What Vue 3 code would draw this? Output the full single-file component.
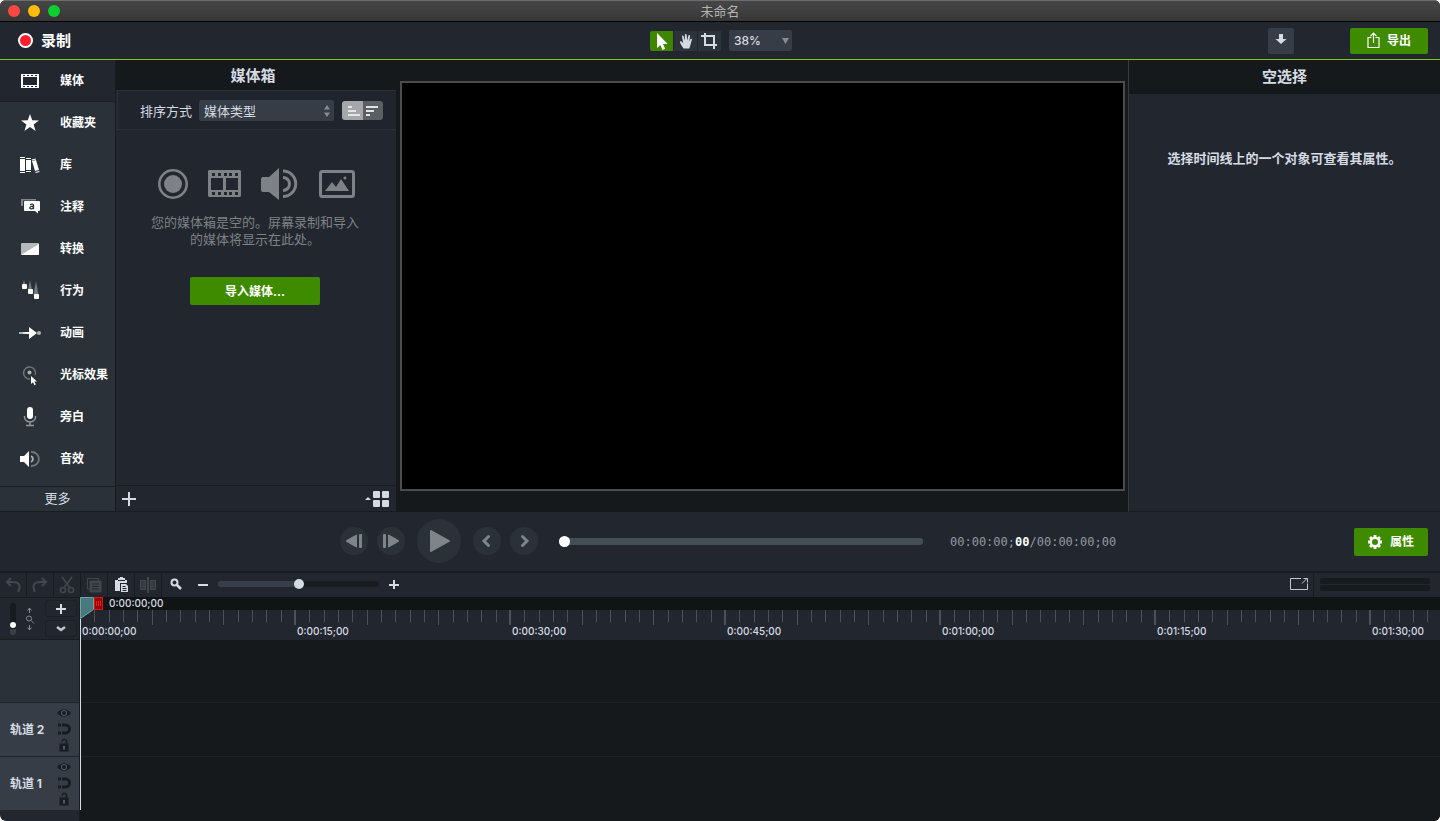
<script setup>
import { ref } from 'vue'

const tools = [
  { id: 'media', label: '媒体' },
  { id: 'favorites', label: '收藏夹' },
  { id: 'library', label: '库' },
  { id: 'annotations', label: '注释' },
  { id: 'transitions', label: '转换' },
  { id: 'behaviors', label: '行为' },
  { id: 'animations', label: '动画' },
  { id: 'cursor', label: '光标效果' },
  { id: 'narration', label: '旁白' },
  { id: 'audio', label: '音效' },
]
const activeTool = ref('media')
const position = ref(0)
const zoom = ref(50)
const trackHeight = ref(25)
const tracks = ['轨道 2', '轨道 1']

const secondWidth = 215 / 15
const ticks = Array.from({ length: 94 }, (_, i) => i + 1).map((s) => {
  const major = s % 15 === 0
  return {
    x: Math.round(s * secondWidth) - (major ? 1 : 0),
    h: s % 5 === 0 ? 15 : 12,
    w: major ? 2 : 1,
  }
})
const labels = ['0:00:00;00', '0:00:15;00', '0:00:30;00', '0:00:45;00', '0:01:00;00', '0:01:15;00', '0:01:30;00']
</script>

<template>
  <div class="window">
    <header class="titlebar">
      <div class="lights"><i class="red"></i><i class="yellow"></i><i class="green"></i></div>
      <span>未命名</span>
    </header>

    <div class="toolbar">
      <div class="side">
        <button class="record"><i></i>录制</button>
      </div>
      <div class="center">
        <div class="modes">
          <button class="on" aria-label="选择">
            <svg width="24" height="20" viewBox="0 0 24 20"><path d="M7 2v15l3.300-3 2.200 5 2.700-1.200-2.200-4.800h4.700z" fill="#fff" /></svg>
          </button>
          <button aria-label="平移">
            <svg width="24" height="20" viewBox="0 0 24 20"><path d="M9.500 17.500C8 15 6.500 13 6 11.200c-.2-1 .9-1.300 1.600-.6l1.600 1.600L8 5.500c-.2-1.200 1.300-1.500 1.600-.3l1.200 4.300.1-5.600c0-1.300 1.700-1.300 1.800 0l.4 5.500 1.300-4.600c.3-1.100 1.800-.8 1.600.4l-.8 5.200 1.400-2.300c.6-.9 1.700-.4 1.400.5-.7 2-1.400 5.900-2.700 8.900z" fill="#d5dbe3" /></svg>
          </button>
          <button aria-label="裁剪">
            <svg width="24" height="20" viewBox="0 0 24 20" fill="none" stroke="#d5dbe3" stroke-width="2"><path d="M7 2v12h12M3 5h13v13" /></svg>
          </button>
        </div>
        <div class="select scale">
          <select aria-label="缩放"><option>38%</option></select>
          <svg width="7" height="6" viewBox="0 0 7 6"><path d="M0 0h7L3.500 6z" fill="#858c94" /></svg>
        </div>
      </div>
      <div class="side end">
        <button class="download" aria-label="下载">
          <svg width="26" height="26" viewBox="0 0 26 26"><path d="M11 6h4v5h3.500L13 16 7.500 11H11z" fill="#d5dbe3" /></svg>
        </button>
        <button class="primary export">
          <svg width="13" height="17" viewBox="0 0 13 17" fill="none" stroke="#fff" stroke-width="1.200"><path d="M4.500 5.500H1v10h11v-10H8.500M6.500 11V1.500M3.500 4.200l3-3 3 3" /></svg>
          导出
        </button>
      </div>
    </div>

    <main class="main">
      <nav class="tools">
        <button v-for="t in tools" :key="t.id" class="tool" :class="{ active: t.id === activeTool }" @click="activeTool = t.id">
          <svg width="24" height="24" viewBox="0 0 24 24" fill="#fff">
            <template v-if="t.id === 'media'">
              <path fill-rule="evenodd" d="M3 5h18v14H3zm1 3v8h16V8zM5 6v1h2V6zm4 0v1h2V6zm4 0v1h2V6zm4 0v1h2V6zM5 17v1h2v-1zm4 0v1h2v-1zm4 0v1h2v-1zm4 0v1h2v-1z" />
              <path d="M4 8h1v8H4zm15 0h1v8h-1z" />
            </template>
            <path v-else-if="t.id === 'favorites'" d="M12 3l2.200 6.300 6.800.2-5.400 4 2 6.500-5.600-3.900L6.400 20l2-6.500L3 9.500l6.800-.2z" />
            <g v-else-if="t.id === 'library'">
              <path d="M2 6h5v12H2zM8 7h5v10H8zM14 8l4-1 3 10-4 1zM2 4h5v1H2zM2 19h5v1H2zM8 5h5v1H8zM8 18h5v1H8zM13.700 6.500l4-1 .3 1-4 1zM17.300 19l4-1 .2 1-4 1z" />
            </g>
            <template v-else-if="t.id === 'annotations'">
              <path d="M3 4h15v1.500H5V11H3z" fill="#80868b" />
              <path fill-rule="evenodd" d="M7 6h14q1 0 1 1v8q0 1-1 1h-1v2.500L17 16H7q-1 0-1-1V7q0-1 1-1z" />
              <path d="M12 9.700q3-1.500 3.500.8v3.700M15.300 11.200c-4-.1-4.500 3-1.800 2.600q1.500-.3 1.800-1.500" fill="none" stroke="#2a3138" stroke-width="1.300" />
            </template>
            <template v-else-if="t.id === 'transitions'">
              <path d="M4 6h16q1 0 1 1v10q0 1-1 1H4q-1 0-1-1V7q0-1 1-1z" fill="#b5b9bc" /><path d="M21 7v10q0 1-1 1H3z" />
            </template>
            <template v-else-if="t.id === 'behaviors'">
              <path d="M6 1l1.500 5h-3zM12 1l2 10h-4zM18 2l2.500 14h-5z" fill="#73797e" /><rect x="4" y="5" width="5" height="5" rx="1" /><rect x="10" y="10" width="5" height="5" rx="1" /><rect x="16" y="15" width="5" height="5" rx="1" />
            </template>
            <template v-else-if="t.id === 'animations'">
              <path d="M1 11h10v2H1z" fill="#adb2b5" /><circle cx="21" cy="12" r="2" fill="#adb2b5" /><path d="M5 11.500l6-.5V6l8 6-8 6v-5l-6-.5z" />
            </template>
            <template v-else-if="t.id === 'cursor'">
              <path d="M12 16A6 6 0 1 1 17.200 12" fill="none" stroke="#70777c" stroke-width="1.500" /><circle cx="11.500" cy="9.500" r="2" fill="#adb2b5" /><path d="M13 13v8l2-1.800 1.400 3 1.400-.6-1.400-3h2.600z" />
            </template>
            <template v-else-if="t.id === 'narration'">
              <rect x="9" y="2" width="6" height="12" rx="3" /><path d="M6.500 11v1c0 6.500 11 6.500 11 0v-1M12 17v3M8 20.500h8" fill="none" stroke="#92989c" stroke-width="1.500" />
            </template>
            <template v-else>
              <path d="M2 9h4l5-5v16l-5-5H2z" /><path d="M13 9.200a3 3 0 0 1 0 5.600" fill="none" stroke="#aeb3b6" stroke-width="1.800" /><path d="M13 5c10.500-.5 10.500 14.500 0 14" fill="none" stroke="#70777c" stroke-width="1.800" />
            </template>
          </svg>
          {{ t.label }}
        </button>
        <button class="more">更多</button>
      </nav>

      <section class="media">
        <h2>媒体箱</h2>
        <div class="sort">
          <label for="sort">排序方式</label>
          <div class="select sorter">
            <select id="sort"><option>媒体类型</option></select>
            <svg width="6" height="12" viewBox="0 0 6 12"><path d="M3 0l3 4.500H0zM0 7.500h6L3 12z" fill="#858c94" /></svg>
          </div>
          <div class="order">
            <button class="on" aria-label="升序"><svg width="20" height="18" viewBox="0 0 20 18" stroke="#e3e4e6" stroke-width="2"><path d="M5 5h4M5 9h8M5 13h12" /></svg></button>
            <button aria-label="降序"><svg width="20" height="18" viewBox="0 0 20 18" stroke="#e3e4e6" stroke-width="2"><path d="M3 5h12M3 9h8M3 13h4" /></svg></button>
          </div>
        </div>
        <div class="empty">
          <div class="kinds">
            <svg width="30" height="32" viewBox="0 0 30 32"><circle cx="15" cy="16" r="13.700" fill="none" stroke="#7e8185" stroke-width="2.600" /><circle cx="15" cy="16" r="9" fill="#7e8185" /></svg>
            <svg width="33" height="32" viewBox="0 0 33 32"><path fill-rule="evenodd" fill="#7e8185" d="M1 2h31l1 1v25l-1 1H1l-1-1V3zm2 8v12h12V10zm15 0v12h12V10zM4 5v3h3V5zm6 0v3h3V5zm6 0v3h3V5zm5 0v3h3V5zm6 0v3h3V5zM4 24v3h3v-3zm6 0v3h3v-3zm6 0v3h3v-3zm5 0v3h3v-3zm6 0v3h3v-3z" /></svg>
            <svg width="38" height="34" viewBox="0 0 38 34"><path d="M2 10h6L18 1v32L8 25H2q-2 0-2-2V12q0-2 2-2z" fill="#7e8185" /><path d="M22 10.500a6.500 6.500 0 0 1 0 13M22 4a12.700 12.700 0 0 1 0 25.500" fill="none" stroke="#7e8185" stroke-width="3" /></svg>
            <svg width="36" height="32" viewBox="0 0 36 32"><rect x="1.500" y="3.500" width="33" height="25" rx="2" fill="none" stroke="#7e8185" stroke-width="3" /><path d="M6 23l7-9 4 5 5-8 8 12zM26 8.500a1.500 1.500 0 1 1-.1 0z" fill="#7e8185" /></svg>
          </div>
          <p>您的媒体箱是空的。屏幕录制和导入<br />的媒体将显示在此处。</p>
          <button class="primary import">导入媒体...</button>
        </div>
        <div class="bin-foot">
          <button aria-label="添加"><svg width="14" height="14" viewBox="0 0 14 14" stroke="#d5dbe3" stroke-width="2"><path d="M7 0v14M0 7h14" /></svg></button>
          <button aria-label="视图"><svg width="24" height="16" viewBox="0 0 24 16" fill="#d5dbe3"><path d="M0 9l3-3 3 3z" /><rect x="8" width="7" height="7" rx="1" /><rect x="17" width="7" height="7" rx="1" /><rect x="8" y="9" width="7" height="7" rx="1" /><rect x="17" y="9" width="7" height="7" rx="1" /></svg></button>
        </div>
      </section>

      <section class="stage"><div class="video"></div></section>

      <aside class="props">
        <h2>空选择</h2>
        <p>选择时间线上的一个对象可查看其属性。</p>
      </aside>
    </main>

    <div class="playback">
      <div class="transport">
        <button aria-label="上一帧"><svg width="16" height="14" viewBox="0 0 16 14" fill="#7e848a"><path d="M11 .5v13Q9 13 0 7.500V6.500Q9 1 11 .5z" /><rect x="13" width="3" height="14" rx="1" /></svg></button>
        <button aria-label="下一帧"><svg width="16" height="14" viewBox="0 0 16 14" fill="#7e848a"><path d="M5 .5v13Q7 13 16 7.500V6.500Q7 1 5 .5z" /><rect width="3" height="14" rx="1" /></svg></button>
        <button class="play" aria-label="播放"><svg width="22" height="24" viewBox="0 0 22 24"><path d="M3 2v20l18-10z" fill="#7e848a" stroke="#7e848a" stroke-width="2" stroke-linejoin="round" /></svg></button>
        <button aria-label="上一个"><svg width="14" height="14" viewBox="0 0 14 14" fill="none" stroke="#7e848a" stroke-width="3" stroke-linecap="round"><path d="M8.500 2.500L4 7l4.500 4.500" /></svg></button>
        <button aria-label="下一个"><svg width="14" height="14" viewBox="0 0 14 14" fill="none" stroke="#7e848a" stroke-width="3" stroke-linecap="round"><path d="M5.500 2.500L10 7l-4.500 4.500" /></svg></button>
      </div>
      <input v-model="position" class="scrub" type="range" min="0" max="100" aria-label="播放位置" />
      <div class="time">00:00:00;<b>00</b>/00:00:00;00</div>
      <button class="primary properties">
        <svg width="14" height="14" viewBox="0 0 14 14"><circle cx="7" cy="7" r="4.300" fill="none" stroke="#fff" stroke-width="2.500" /><path d="M7 0v2M7 12v2M0 7h2M12 7h2M2 2l1.500 1.500M10.500 10.500L12 12M2 12l1.500-1.500M10.500 3.500L12 2" stroke="#fff" stroke-width="2.800" /></svg>
        属性
      </button>
    </div>

    <div class="editbar">
      <button aria-label="撤销"><svg width="20" height="18" viewBox="0 0 20 18" fill="none" stroke="#42474d" stroke-width="2"><path d="M8 2L4 6l4 4M4 6h6c7 0 8 5 5 10" /></svg></button>
      <button aria-label="重做"><svg width="20" height="18" viewBox="0 0 20 18" fill="none" stroke="#42474d" stroke-width="2"><path d="M12 2l4 4-4 4M16 6h-6C3 6 2 11 5 16" /></svg></button>
      <button aria-label="剪切"><svg width="20" height="18" viewBox="0 0 20 18" fill="none" stroke="#42474d" stroke-width="1.600"><path d="M5 1l8 11M15 1L7 12" /><circle cx="6" cy="14" r="2.500" /><circle cx="14" cy="14" r="2.500" /></svg></button>
      <button aria-label="复制"><svg width="20" height="18" viewBox="0 0 20 18" fill="none" stroke="#42474d"><path d="M5.500 13h-2V2.500h11V4" /><path d="M6 5h11v11H6z" fill="#42474d" /><path d="M8 8h7M8 10.500h7M8 13h7" stroke="#22272f" /></svg></button>
      <button aria-label="粘贴"><svg width="20" height="18" viewBox="0 0 20 18" fill="#d5dbe3"><path d="M4 4h3V2h2V1h3v1h2v2h2v3H9v8H4z" /><path d="M7 4.500h7" stroke="#22272f" /><path fill-rule="evenodd" d="M10 8h5l2 2v6h-7zm1.500 2v1h3v-1zm0 2v1h4v-1zm0 2v1h4v-1z" /></svg></button>
      <button aria-label="拆分"><svg width="20" height="18" viewBox="0 0 20 18" fill="#373c42" stroke="#42474d"><rect x="2.500" y="4.500" width="5" height="9" /><rect x="12.500" y="4.500" width="5" height="9" /><path d="M10 1v16" stroke-width="2" /></svg></button>
      <div class="zoomer">
        <svg width="12" height="12" viewBox="0 0 12 12" fill="none" stroke="#d5dbe3" stroke-width="2"><circle cx="4.500" cy="4.500" r="3" /><path d="M7 7l4 4" stroke-width="2.500" /></svg>
        <button aria-label="缩小"><svg width="10" height="10" viewBox="0 0 10 10" stroke="#d5dbe3" stroke-width="2"><path d="M0 6h10" /></svg></button>
        <input v-model="zoom" type="range" aria-label="时间线缩放" />
        <button aria-label="放大"><svg width="10" height="10" viewBox="0 0 10 10" stroke="#d5dbe3" stroke-width="2"><path d="M0 6h10M5 1v10" /></svg></button>
      </div>
      <button class="detach" aria-label="分离时间线"><svg width="20" height="14" viewBox="0 0 20 14" fill="none" stroke="#c1c6cc"><path d="M12 1.500H1.500v11h17V6.500M13 6.500L18 1.500M14.500 1.500h4v4" /></svg></button>
      <div class="meters"><i></i><i></i></div>
    </div>

    <section class="timeline">
      <div class="heads">
        <div class="controls">
          <input v-model="trackHeight" class="vertical" type="range" aria-label="轨道高度" />
          <svg width="10" height="24" viewBox="0 0 10 24" fill="none" stroke="#858b91"><path d="M4.500 1v5M2.500 3.500l2-2.500 2 2.500M4.500 23v-5M2.500 20.500l2 2.500 2-2.500" /><circle cx="4" cy="11.500" r="2.500" /><path d="M6 13.500l3 3" /></svg>
          <div class="stack">
            <button aria-label="添加轨道"><svg width="10" height="10" viewBox="0 0 10 10" stroke="#d5dbe3" stroke-width="2"><path d="M0 5h10M5 0v10" /></svg></button>
            <button aria-label="轨道选项"><svg width="10" height="6" viewBox="0 0 10 6" fill="none" stroke="#c1c6cc" stroke-width="2.500"><path d="M1 1l4 3 4-3" /></svg></button>
          </div>
        </div>
        <div class="spacer"></div>
        <div v-for="t in tracks" :key="t" class="head">
          <span>{{ t }}</span>
          <div class="flags">
            <button aria-label="可见"><svg width="14" height="10" viewBox="0 0 14 10"><path d="M0 5q7-7.500 14 0-7 7.500-14 0z" fill="#191d21" /><circle cx="7" cy="5" r="2.500" fill="#191d21" stroke="#4b525a" stroke-width="1.200" /></svg></button>
            <button aria-label="磁性"><svg width="14" height="12" viewBox="0 0 14 12"><path d="M5 2h3.500a4 4 0 0 1 0 8H5" fill="none" stroke="#191d21" stroke-width="3" /><path d="M1 .5h3v3H1zM1 8.500h3v3H1z" fill="#191d21" /></svg></button>
            <button aria-label="锁定"><svg width="14" height="14" viewBox="0 0 14 14"><path d="M5 3.500q1.500-4 4.500-1V6" fill="none" stroke="#191d21" stroke-width="1.500" /><rect x="2.500" y="5.500" width="9" height="8" fill="#191d21" /><path d="M7 8v3.500" stroke="#68717a" stroke-width="1.500" /></svg></button>
          </div>
        </div>
        <div class="head-foot"></div>
      </div>
      <div class="lanes">
        <div class="top"><span>0:00:00;00</span></div>
        <div class="ruler">
          <svg width="1400" height="15"><rect v-for="t in ticks" :key="t.x" :x="t.x" y="0" :width="t.w" :height="t.h" fill="#4c5157" /></svg>
          <div class="labels"><span v-for="l in labels" :key="l">{{ l }}</span></div>
        </div>
        <div class="lane gap"></div>
        <div class="lane"></div>
        <div class="lane"></div>
        <div class="playhead">
          <svg width="24" height="22" viewBox="0 0 24 22"><path d="M.5.500h13v12L.5 21.500z" fill="#47797e" stroke="#6fa3a5" /><rect x="14.500" y=".5" width="8" height="12" fill="#9c0000" stroke="#d31515" /><path d="M16.500 4v5M18.500 4v5M20.500 4v5" stroke="#e03030" stroke-width=".8" /></svg>
          <i></i>
        </div>
      </div>
    </section>
  </div>
</template>

<style>
body { background: #fff; }
</style>

<style scoped>
* { box-sizing: border-box; }
.window { min-height: 100vh; display: flex; flex-direction: column; overflow: hidden; border-radius: 6px; background: #22272f; color: #d5dbe3; font: 13px/18px Inter, "Noto Sans CJK SC", sans-serif; }
button { display: flex; align-items: center; justify-content: center; margin: 0; padding: 0; border: 0; background: none; color: inherit; font: inherit; }
svg { display: block; flex: none; }
h2, p { margin: 0; }
h2 { font-size: 15px; text-align: center; font-weight: 700; background: #16191b; }
input { appearance: none; margin: 0; background: none; }

.titlebar { position: relative; height: 22px; display: flex; align-items: center; justify-content: center; background: linear-gradient(#464646, #373737); border-top: 1px solid #6b6d6f; border-bottom: 1px solid #000; color: #b2b2b2; }
.lights { position: absolute; left: 8px; top: 4px; display: flex; gap: 8px; }
.lights i { width: 12px; height: 12px; border-radius: 50%; }
.red { background: #fc4840; }
.yellow { background: #fdbc0a; }
.green { background: #0ccf30; }

.toolbar { display: flex; align-items: center; height: 38px; padding: 0 12px 0 18px; border-bottom: 1px solid #84c225; }
.side { flex: 1; display: flex; align-items: center; }
.end { justify-content: flex-end; gap: 56px; }
.record { gap: 8px; font-size: 15px; font-weight: 700; color: #fff; }
.record i { width: 15px; height: 15px; border: 2px solid #fff; border-radius: 50%; background: #ff1f2b; }
.center { display: flex; align-items: center; gap: 8px; margin-left: -4px; }
.modes { display: flex; gap: 1px; }
.modes button { width: 23px; height: 20px; background: #2c333b; }
.modes .on { background: #3f8600; border-radius: 2px 0 0 2px; }
.select { position: relative; }
.select svg { position: absolute; right: 3px; top: 50%; margin-top: -3px; pointer-events: none; }
.select select { appearance: none; display: block; width: 100%; border: 0; border-radius: 2px; background: #363d46; color: #d5dbe3; font: inherit; line-height: 20px; height: 21px; padding: 0 5px; }
.scale { width: 63px; font-size: 12px; font-weight: 500; }
.sorter { flex: 1; }
.sorter svg { margin-top: -6px; right: 4px; }
.download { width: 26px; height: 26px; border-radius: 2px; background: #363d46; }
.primary { background: #3f8b00; color: #fff; border-radius: 2px; font-size: 12px; font-weight: 700; }
.export { width: 78px; height: 26px; gap: 7px; }

.main { display: grid; grid-template-columns: 116px 281px 1fr 312px; }
.tools { display: flex; flex-direction: column; background: #2a3138; border-right: 1px solid #171c21; }
.tool { height: 42px; justify-content: flex-start; gap: 18px; padding-left: 18px; font-size: 12px; font-weight: 700; color: #fff; white-space: nowrap; }
.tool.active { background: #22272f; border-bottom: 1px solid #1a1f24; }
.more { height: 26px; margin-top: 6px; padding-bottom: 2px; border-top: 1px solid #171c21; border-bottom: 1px solid #171c21; }
.media { display: flex; flex-direction: column; border-right: 1px solid #16191b; border-bottom: 1px solid #171c21; }
.media h2 { height: 30px; line-height: 32px; padding-right: 6px; }
.sort { height: 40px; display: flex; align-items: center; gap: 7px; margin-left: 1px; padding: 1px 13px 0 22px; border: 1px solid #2c3137; border-right: 0; background: #20242c; }
.order { display: flex; border-radius: 3px; overflow: hidden; margin-left: 1px; }
.order button { width: 20px; height: 19px; background: #5b5e63; }
.order .on { width: 21px; background: #a4a6a9; }
.empty { flex: 1; display: flex; flex-direction: column; align-items: center; padding: 37px 2px 0 0; color: #7e8185; line-height: 17px; text-align: center; }
.kinds { display: flex; align-items: center; gap: 20px; margin: 0 0 13px 2px; }
.import { width: 130px; height: 28px; margin-top: 29px; }
.bin-foot { height: 26px; display: flex; align-items: center; justify-content: space-between; padding: 0 7px 0 6px; border-top: 1px solid #171c21; }
.stage { display: flex; background: #16191b; padding: 21px 3px 21px 3px; }
.video { flex: 1; border: 2px solid #4c4c4c; background: #000; }
.props { border-left: 1px solid #373b3f; border-bottom: 1px solid #171c21; text-align: center; }
.props h2 { line-height: 34px; }
.props p { margin-top: 55px; font-weight: 700; }

.playback { display: flex; align-items: center; height: 61px; padding: 0 12px 0 340px; border-bottom: 2px solid #171c21; }
.transport { display: flex; align-items: center; gap: 9px; margin-bottom: 2px; }
.transport button { width: 28px; height: 28px; border-radius: 50%; background: #2b3139; }
.transport .play { width: 44px; height: 44px; margin: 0 3px; }
.scrub { width: 364px; height: 12px; margin-left: 21px; }
.scrub::-webkit-slider-runnable-track { height: 7px; border-radius: 3px; background: #455056; }
.scrub::-webkit-slider-thumb { appearance: none; width: 11px; height: 11px; margin-top: -2px; border-radius: 50%; background: #fff; }
.time { margin-left: 27px; font: 12px/18px "DejaVu Sans Mono", monospace; color: #9298a0; }
.time b { color: #fff; }
.properties { width: 74px; height: 28px; gap: 8px; margin-left: auto; }

.editbar { display: flex; align-items: stretch; height: 24px; }
.editbar > button { width: 27px; border-right: 1px solid #171c21; }
.zoomer { display: flex; align-items: center; gap: 10px; padding: 0 0 2px 8px; }
.zoomer > svg { margin-right: 6px; }
.zoomer input { width: 161px; height: 12px; }
.zoomer input::-webkit-slider-runnable-track { height: 6px; border-radius: 3px; background: linear-gradient(90deg, #383e47 50%, #171b1e 50%); }
.zoomer input::-webkit-slider-thumb { appearance: none; width: 10px; height: 10px; margin-top: -2px; border-radius: 50%; background: #d5dbe3; }
.editbar > .detach { margin-left: auto; width: 25px; justify-content: flex-start; padding-bottom: 3px; }
.meters { display: flex; flex-direction: column; justify-content: center; gap: 1px; width: 126px; padding: 0 10px 2px 6px; }
.meters i { height: 6px; border-radius: 2px; background: #171b1e; }

.timeline { flex: 1; display: grid; grid-template-columns: 80px 1fr; }
.heads { display: flex; flex-direction: column; border-right: 1px solid #171c21; }
.controls { display: flex; align-items: center; height: 43px; padding: 0 2px 0 9px; border-top: 1px solid #171c21; border-bottom: 1px solid #171c21; }
.vertical { writing-mode: vertical-lr; direction: rtl; width: 8px; height: 32px; margin-right: 8px; flex: none; }
.vertical::-webkit-slider-runnable-track { width: 6px; border-radius: 3px; background: linear-gradient(#171b1e 80%, #383e47 80%); }
.vertical::-webkit-slider-thumb { appearance: none; width: 6px; height: 6px; border-radius: 50%; background: #fff; }
.stack { display: grid; gap: 3px; margin-left: auto; }
.stack button { width: 32px; height: 17px; border: 1px solid #1b2026; border-radius: 3px; }
.spacer { height: 62px; background: #2a3138; }
.head { display: flex; justify-content: space-between; align-items: center; height: 54px; padding: 0 8px 0 10px; border-top: 1px solid #20252c; background: #363d46; font-size: 12px; font-weight: 700; }
.flags { display: grid; justify-items: center; gap: 4px; margin-bottom: 2px; }
.flags button { height: 12px; }
.head-foot { flex: 1; }
.lanes { position: relative; overflow: hidden; background: #16191b; }
.top { height: 13px; padding-left: 29px; background: #111415; }
.top span, .labels span { font-size: 10px; line-height: 13px; font-weight: 500; display: block; }
.ruler { height: 30px; background: #22272f; }
.labels { display: flex; padding: 0 0 0 2px; }
.labels span { flex: none; width: 215px; }
.lane { height: 54px; border-top: 1px solid #1e2225; }
.gap { height: 62px; border-color: #16191b; }
.playhead { position: absolute; left: 0; top: 0; height: 213px; display: flex; flex-direction: column; }
.playhead i { flex: 1; width: 1px; background: #d5dbe3; }
</style>
